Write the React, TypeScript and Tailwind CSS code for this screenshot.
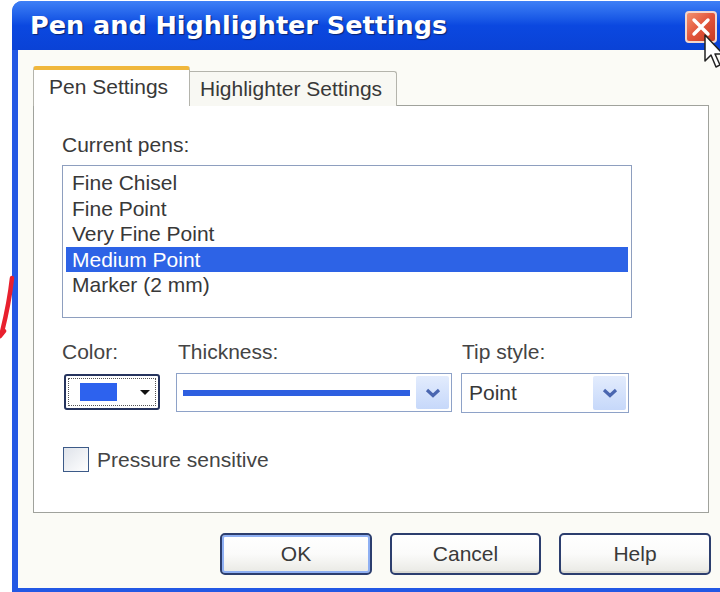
import type { ReactNode } from "react";

const pens = ["Fine Chisel", "Fine Point", "Very Fine Point", "Medium Point", "Marker (2 mm)"];
const selectedPen = "Medium Point";

function DropButton() {
  return (
    <span className="flex h-full w-[33px] items-center justify-center rounded-[2px] bg-gradient-to-b from-[#e3ecfd] to-[#c6d8fa]">
      <svg width="16" height="10" viewBox="0 0 16 10">
        <path d="M2 2 L8 7.5 L14 2" fill="none" stroke="#4a66b0" strokeWidth="3.2" />
      </svg>
    </span>
  );
}

function XpButton({ children, isDefault }: { children: ReactNode; isDefault?: boolean }) {
  return (
    <button
      className={
        "flex h-[42px] w-full items-center justify-center rounded-[5px] border-2 border-[#2c3e6e] bg-gradient-to-b from-white via-[#fbfbfa] to-[#e9e9e4] text-[21px] text-[#3a3a3a] " +
        (isDefault ? "shadow-[inset_0_0_0_2px_#8fb0f3]" : "shadow-[inset_0_-2px_0_#d9d9d2]")
      }
    >
      {children}
    </button>
  );
}

export default function App() {
  return (
    <div className="relative h-[592px] w-[720px] overflow-hidden bg-white pl-[12px] pt-[1px] font-['Liberation_Sans',Arial,sans-serif]">
      <div className="flex h-[640px] w-[720px] flex-col rounded-tl-[10px] bg-[#2358e4]">
        {/* title bar */}
        <div className="flex h-[49px] items-center rounded-tl-[10px] bg-gradient-to-b from-[#3f80f6] via-[#0b48e0] to-[#0a42d6] pl-[18px]">
          <span className="font-['DejaVu_Sans',Verdana,sans-serif] text-[25.5px] font-bold text-white [text-shadow:1px_1px_1px_#0a2470]">
            Pen and Highlighter Settings
          </span>
          <span className="ml-auto mr-[15px] mt-[2px] flex h-[32px] w-[32px] items-center justify-center rounded-[4px] border-2 border-[#f3d6cc] bg-gradient-to-br from-[#f2906e] via-[#e2543a] to-[#c43a22]">
            <svg width="20" height="20" viewBox="0 0 20 20">
              <path d="M3 3 L17 17 M17 3 L3 17" stroke="white" strokeWidth="3.4" strokeLinecap="round" />
            </svg>
          </span>
        </div>

        {/* dialog body */}
        <div className="ml-[6px] h-[538px] bg-[#fbfbf6] pl-[15px] pt-[16px]">
          <div className="relative z-10 -mb-px flex items-end">
            <div className="flex h-[40px] w-[157px] items-center rounded-t-[3px] border-x border-t-[4px] border-x-[#b4b4ac] border-t-[#f0b73c] bg-white pb-[3px] pl-[15px] text-[21px] text-[#383838]">
              Pen Settings
            </div>
            <div className="flex h-[35px] w-[207px] items-center rounded-tr-[3px] border-r border-t border-[#b4b4ac] bg-[#f8f8f3] pl-[10px] text-[21px] text-[#383838]">
              Highlighter Settings
            </div>
          </div>

          <div className="h-[408px] w-[676px] border border-[#a0a29c] bg-white pl-[28px] pt-[29px]">
            <div className="h-[20px] text-[21px] leading-[20px] text-[#3a3a3a]">Current pens:</div>

            <div className="mt-[10px] h-[153px] w-[570px] border border-[#8e9fbf] bg-white px-[3px] pt-[4px]">
              {pens.map((pen) => (
                <div
                  key={pen}
                  className={
                    "flex h-[25.6px] items-center pl-[6px] text-[21px] " +
                    (pen === selectedPen ? "bg-[#2d63e6] text-white" : "text-[#383838]")
                  }
                >
                  {pen}
                </div>
              ))}
            </div>

            <div className="mt-[24px] flex h-[20px] text-[21px] leading-[20px] text-[#444]">
              <span className="w-[116px]">Color:</span>
              <span className="w-[284px]">Thickness:</span>
              <span>Tip style:</span>
            </div>

            <div className="mt-[11px] flex items-start">
              <div className="ml-[2px] mt-[1px] flex h-[36px] w-[96px] items-center rounded-[3px] border-2 border-[#26345e] bg-white p-[2px]">
                <div className="flex h-full w-full items-center border border-dotted border-[#555] pl-[11px]">
                  <span className="h-[18px] w-[37px] bg-[#2d62ee]" />
                  <svg className="ml-[22px]" width="12" height="7" viewBox="0 0 12 7">
                    <path d="M1 1 L11 1 L6 6 Z" fill="#111" />
                  </svg>
                </div>
              </div>

              <div className="ml-[16px] flex h-[39px] w-[276px] items-center border border-[#8ea2c8] bg-white p-[2px] pl-[6px]">
                <span className="h-[6px] flex-1 bg-[#2e5fe0]" />
                <span className="ml-[6px] h-full">
                  <DropButton />
                </span>
              </div>

              <div className="ml-[9px] flex h-[40px] w-[168px] items-center border border-[#8ea2c8] bg-white p-[2px] pl-[7px]">
                <span className="flex-1 text-[21px] text-[#383838]">Point</span>
                <span className="h-full">
                  <DropButton />
                </span>
              </div>
            </div>

            <label className="mt-[31px] flex items-center">
              <span className="ml-[1px] h-[25px] w-[26px] border border-[#3c5a88] bg-gradient-to-br from-[#dfe3ea] to-white" />
              <span className="ml-[8px] text-[21px] text-[#444]">Pressure sensitive</span>
            </label>
          </div>

          <div className="mt-[20px] flex gap-[18px] pl-[187px]">
            <div className="w-[152px]">
              <XpButton isDefault>OK</XpButton>
            </div>
            <div className="w-[151px]">
              <XpButton>Cancel</XpButton>
            </div>
            <div className="w-[152px]">
              <XpButton>Help</XpButton>
            </div>
          </div>
        </div>
      </div>

      {/* ink stroke in the left margin */}
      <svg className="absolute left-0 top-[274px]" width="16" height="66" viewBox="0 0 16 66">
        <path d="M12 4 C 10 22, 6 42, 2 58 M0 62 L4 57" fill="none" stroke="#e8202e" strokeWidth="4.5" strokeLinecap="round" />
      </svg>

      {/* mouse pointer over the close box */}
      <svg className="absolute left-[704px] top-[34px]" width="22" height="36" viewBox="0 0 22 36">
        <path d="M1 1 L1 27 L7 21 L12 33 L16 31 L11 20 L19 20 Z" fill="white" stroke="#222" strokeWidth="1.5" strokeLinejoin="round" />
      </svg>
    </div>
  );
}
